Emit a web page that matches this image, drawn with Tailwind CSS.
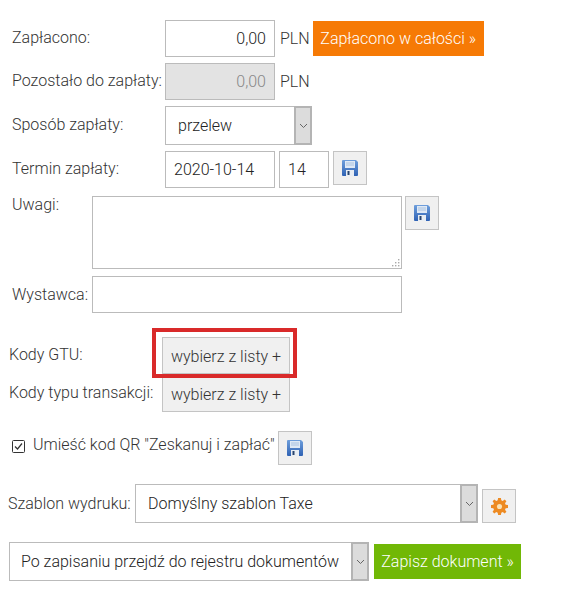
<!DOCTYPE html>
<html>

<head>
  <meta charset="utf-8">
  <meta name="viewport" content="width=device-width">
  <script src="https://cdn.jsdelivr.net/npm/@tailwindcss/browser@4"></script>
  <title>Dokument</title>
</head>

<body class="bg-white font-['Roboto',sans-serif] font-light text-[16px] text-[#333]">
  <form class="flex flex-col w-[585px] h-[595px] pt-[20px] pl-[12px] overflow-hidden">

    <!-- platnosc -->
    <div class="flex items-center h-[37px]">
      <label class="w-[153px] -mt-[2px]">Zapłacono:</label>
      <input type="text" value="0,00" class="w-[110px] h-[37px] border border-[#bbb] px-[8px] text-right text-[#222]">
      <span class="ml-[5px]">PLN</span>
      <button type="button" class="ml-[3px] w-[171px] h-[35px] bg-[#f67a05] text-white">Zapłacono w całości »</button>
    </div>

    <div class="flex items-center h-[37px] mt-[6px]">
      <label class="w-[153px] -mt-[2px] whitespace-nowrap">Pozostało do zapłaty:</label>
      <input type="text" value="0,00" disabled class="w-[110px] h-[37px] border border-[#bbb] bg-[#e3e3e3] px-[8px] text-right text-[#888]">
      <span class="ml-[5px]">PLN</span>
    </div>

    <div class="flex items-center h-[39px] mt-[6px]">
      <label class="w-[153px] -mt-[2px]">Sposób zapłaty:</label>
      <div class="flex w-[147px] h-[39px]">
        <select class="appearance-none flex-1 min-w-0 h-full border border-r-0 border-[#bbb] pl-[12px] text-[#222]">
          <option>przelew</option>
        </select>
        <span class="flex items-center justify-center w-[18px] h-full border-2 border-[#b4b4b4] bg-[#dcdcdc]">
          <svg width="9" height="6" viewBox="0 0 9 6" fill="none" stroke="#666" stroke-width="1"><path d="M1 1l3.5 3.5L8 1" /></svg>
        </span>
      </div>
    </div>

    <div class="flex items-start h-[37px] mt-[6px]">
      <label class="w-[153px] mt-[6px]">Termin zapłaty:</label>
      <input type="text" value="2020-10-14" class="w-[110px] h-[37px] border border-[#bbb] px-[8px] text-[#222]">
      <input type="text" value="14" class="ml-[4px] w-[50px] h-[37px] border border-[#bbb] px-[8px] text-[#222]">
      <button type="button" class="ml-[4px] flex items-center justify-center w-[34px] h-[34px] border border-[#c4c4c4] bg-[#f0f0f0]">
        <svg width="16" height="16" viewBox="0 0 16 16"><defs><linearGradient id="fd1" x1="0" y1="0" x2="0" y2="1"><stop offset="0" stop-color="#6f9fdc" /><stop offset="1" stop-color="#2f62b4" /></linearGradient></defs><path d="M1 0h13l2 2v13a1 1 0 0 1-1 1H1a1 1 0 0 1-1-1V1a1 1 0 0 1 1-1z" fill="url(#fd1)" /><rect x="3" y="1" width="10" height="7" fill="#dfe9f5" /><path d="M4 3h8M4 5h8" stroke="#a9c2e0" /><rect x="4" y="10" width="8" height="6" fill="#e8edf3" /><rect x="5.5" y="11" width="2" height="4" fill="#27446f" /></svg>
      </button>
    </div>

    <div class="flex items-start h-[73px] mt-[8px]">
      <label class="w-[80px] -mt-[3px]">Uwagi:</label>
      <div class="relative w-[310px] h-[73px]">
        <textarea class="block w-full h-full resize-none border border-[#bbb]"></textarea>
        <svg width="9" height="9" viewBox="0 0 9 9" fill="#aaa" class="absolute right-[2px] bottom-[2px]"><rect x="7" y="1" width="1.4" height="1.4" /><rect x="4" y="4" width="1.4" height="1.4" /><rect x="7" y="4" width="1.4" height="1.4" /><rect x="1" y="7" width="1.4" height="1.4" /><rect x="4" y="7" width="1.4" height="1.4" /><rect x="7" y="7" width="1.4" height="1.4" /></svg>
      </div>
      <button type="button" class="ml-[3px] flex items-center justify-center w-[34px] h-[34px] border border-[#c4c4c4] bg-[#f0f0f0]">
        <svg width="16" height="16" viewBox="0 0 16 16"><defs><linearGradient id="fd2" x1="0" y1="0" x2="0" y2="1"><stop offset="0" stop-color="#6f9fdc" /><stop offset="1" stop-color="#2f62b4" /></linearGradient></defs><path d="M1 0h13l2 2v13a1 1 0 0 1-1 1H1a1 1 0 0 1-1-1V1a1 1 0 0 1 1-1z" fill="url(#fd2)" /><rect x="3" y="1" width="10" height="7" fill="#dfe9f5" /><path d="M4 3h8M4 5h8" stroke="#a9c2e0" /><rect x="4" y="10" width="8" height="6" fill="#e8edf3" /><rect x="5.5" y="11" width="2" height="4" fill="#27446f" /></svg>
      </button>
    </div>

    <div class="flex items-center h-[37px] mt-[7px]">
      <label class="w-[80px]">Wystawca:</label>
      <input type="text" class="w-[310px] h-[37px] border border-[#bbb]">
    </div>

    <!-- kody -->
    <div class="relative flex items-center h-[37px] mt-[24px] -ml-[3px]">
      <label class="w-[153px] -mt-[2px]">Kody GTU:</label>
      <button type="button" class="w-[128px] h-[37px] pt-[2px] border border-[#c4c4c4] bg-[#f0f0f0]">wybierz z listy +</button>
      <span class="absolute left-[143px] -top-[9px] w-[145px] h-[50px] border-[4px] border-[#d92a2a]"></span>
    </div>

    <div class="flex items-center h-[37px] mt-[1px] -ml-[3px]">
      <label class="w-[153px] -mt-[2px] whitespace-nowrap">Kody typu transakcji:</label>
      <button type="button" class="w-[128px] h-[37px] pt-[2px] border border-[#c4c4c4] bg-[#f0f0f0]">wybierz z listy +</button>
    </div>

    <div class="flex items-center h-[34px] mt-[19px]">
      <svg width="13" height="13" viewBox="0 0 13 13" fill="none" stroke="#333" class="shrink-0 -mt-[4px]"><rect x="0.5" y="0.5" width="12" height="12" rx="1" /><path d="M3 6.5l2.5 2.5L10 3.5" stroke-width="1.2" /></svg>
      <label class="ml-[8px] -mt-[6px] w-[245px] whitespace-nowrap">Umieść kod QR "Zeskanuj i zapłać"</label>
      <button type="button" class="flex items-center justify-center w-[34px] h-[34px] border border-[#c4c4c4] bg-[#f0f0f0]">
        <svg width="16" height="16" viewBox="0 0 16 16"><defs><linearGradient id="fd3" x1="0" y1="0" x2="0" y2="1"><stop offset="0" stop-color="#6f9fdc" /><stop offset="1" stop-color="#2f62b4" /></linearGradient></defs><path d="M1 0h13l2 2v13a1 1 0 0 1-1 1H1a1 1 0 0 1-1-1V1a1 1 0 0 1 1-1z" fill="url(#fd3)" /><rect x="3" y="1" width="10" height="7" fill="#dfe9f5" /><path d="M4 3h8M4 5h8" stroke="#a9c2e0" /><rect x="4" y="10" width="8" height="6" fill="#e8edf3" /><rect x="5.5" y="11" width="2" height="4" fill="#27446f" /></svg>
      </button>
    </div>

    <!-- szablon i zapis -->
    <div class="flex items-start h-[39px] mt-[19px] -ml-[4px]">
      <label class="w-[127px] mt-[8px] whitespace-nowrap">Szablon wydruku:</label>
      <div class="flex w-[343px] h-[39px]">
        <select class="appearance-none flex-1 min-w-0 h-full border border-r-0 border-[#bbb] pl-[12px] text-[#222]">
          <option>Domyślny szablon Taxe</option>
        </select>
        <span class="flex items-center justify-center w-[18px] h-full border-2 border-[#b4b4b4] bg-[#dcdcdc]">
          <svg width="9" height="6" viewBox="0 0 9 6" fill="none" stroke="#666" stroke-width="1"><path d="M1 1l3.5 3.5L8 1" /></svg>
        </span>
      </div>
      <button type="button" class="ml-[4px] mt-[5px] flex items-center justify-center w-[34px] h-[34px] border border-[#c4c4c4] bg-[#f0f0f0]">
        <svg width="17" height="17" viewBox="0 0 16 16"><path d="M6.7 0h2.6l.4 2.2 1.3.6L12.9 1.5l1.6 1.6-1.3 1.9.6 1.3 2.2.4v2.6l-2.2.4-.6 1.3 1.3 1.9-1.6 1.6-1.9-1.3-1.3.6-.4 2.2H6.7l-.4-2.2-1.3-.6-1.9 1.3-1.6-1.6L2.8 11l-.6-1.3L0 9.3V6.7l2.2-.4.6-1.3-1.3-1.9 1.6-1.6L5 2.8l1.3-.6z" fill="#ed8a22" /><circle cx="8" cy="8" r="2.4" fill="#fbe3b4" /></svg>
      </button>
    </div>

    <div class="flex items-center h-[39px] mt-[19px] -ml-[3px]">
      <div class="flex w-[360px] h-[39px]">
        <select class="appearance-none flex-1 min-w-0 h-full border border-r-0 border-[#bbb] pl-[11px] text-[#222]">
          <option>Po zapisaniu przejdź do rejestru dokumentów</option>
        </select>
        <span class="flex items-center justify-center w-[18px] h-full border-2 border-[#b4b4b4] bg-[#dcdcdc]">
          <svg width="9" height="6" viewBox="0 0 9 6" fill="none" stroke="#666" stroke-width="1"><path d="M1 1l3.5 3.5L8 1" /></svg>
        </span>
      </div>
      <button type="button" class="ml-[5px] w-[147px] h-[35px] bg-[#71b806] text-white">Zapisz dokument »</button>
    </div>

  </form>
</body>

</html>
